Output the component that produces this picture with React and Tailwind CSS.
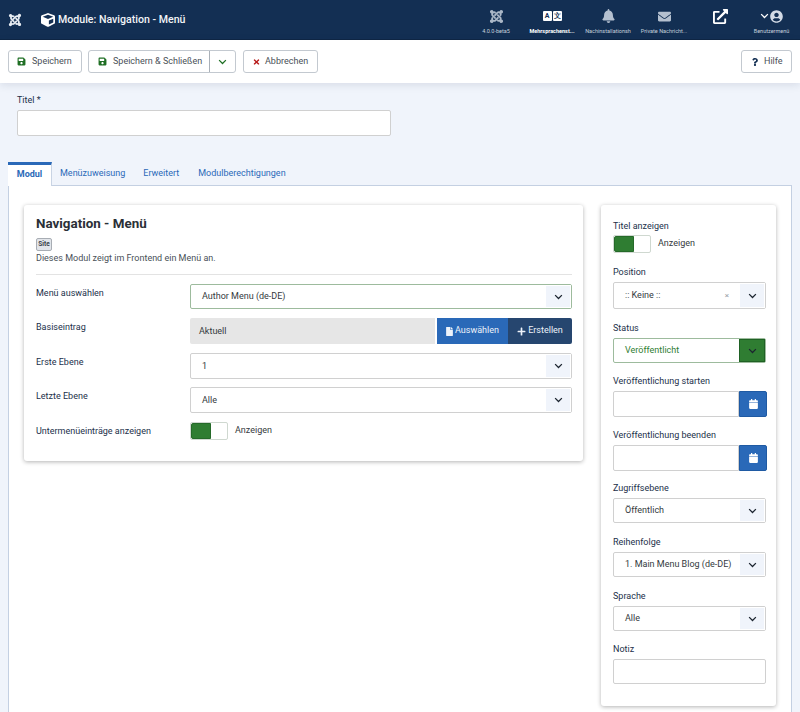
import React from "react";
import { FaJoomla, FaCube, FaBell, FaEnvelope, FaExternalLinkAlt, FaUserCircle, FaSave, FaTimes, FaQuestion, FaFile, FaPlus, FaCalendar } from "react-icons/fa";

function Chevron({ className = "" }) {
  return (
    <svg viewBox="0 0 12 8" className={"w-[9px] h-[6px] " + className} fill="none" stroke="currentColor" strokeWidth="1.7">
      <path d="M1.5 1.5 6 6l4.5-4.5" />
    </svg>
  );
}

function Lang() {
  return (
    <span className="flex gap-[1px] text-[7px] font-bold text-[#132f53] leading-none">
      <span className="w-[9px] h-[10px] bg-white rounded-[1px] flex items-center justify-center">A</span>
      <span className="w-[9px] h-[10px] bg-white rounded-[1px] flex items-center justify-center text-[6.5px] [font-family:'Noto_Sans_CJK_SC',sans-serif]">文</span>
    </span>
  );
}

function HeaderItem({ icon, label, bold, w = "w-[56px]" }) {
  return (
    <div className={"flex flex-col items-center " + w}>
      <div className="h-[18px] flex items-center justify-center text-[#d3dbe6]">{icon}</div>
      <div className={"mt-[2px] text-[5.5px] leading-[9px] whitespace-nowrap " + (bold ? "text-white font-bold" : "text-[#c5cfdc]")}>{label}</div>
    </div>
  );
}

function ToolBtn({ icon, children, w }) {
  return (
    <button className={"h-[23px] bg-white border border-[#c3c9d0] rounded-[3px] flex items-center whitespace-nowrap text-[9px] text-[#495057] " + w}>
      {icon}
      {children}
    </button>
  );
}

function Select({ value, tone = "normal", clear, h = "h-[25px]", nudge = "" }) {
  const green = tone === "green";
  const border = tone === "normal" ? "border-[#d0d0d0]" : "border-[#9dbb9d]";
  return (
    <div className={"w-full bg-white rounded-[2px] border flex items-center text-[9px] " + h + " " + border + (green ? " text-[#2f7d32]" : " text-[#343a40]")}>
      <span className={"flex-1 pl-[11px] whitespace-nowrap " + nudge}>{value}</span>
      {clear && <span className="text-[8px] text-[#9aa0a6] mr-[10px]">×</span>}
      <span className={"w-[26px] h-full flex items-center justify-center text-[#1c2530] " + (green ? "bg-[#2f7d32] border border-[#1f6124]" : "bg-[#f0f4fb] border border-white")}>
        <Chevron />
      </span>
    </div>
  );
}

function Toggle() {
  return (
    <div className="flex items-center">
      <div className="w-[38px] h-[18px] border border-[#cfd8d0] rounded-[2px] bg-white flex">
        <div className="w-[20px] h-full bg-[#2f7d32] border border-[#256a29] rounded-l-[2px]" />
      </div>
      <span className="ml-[7px] text-[9px] text-[#343a40]">Anzeigen</span>
    </div>
  );
}

function Row({ label, children, top = "mt-[9px]" }) {
  return (
    <div className={"flex " + top}>
      <div className="w-[154px] shrink-0 pt-[2px] text-[9px] leading-[15px] text-[#22304a]">{label}</div>
      <div className="flex-1">{children}</div>
    </div>
  );
}

function Side({ label, children, mt = "mt-[12px]" }) {
  return (
    <div className={mt}>
      <div className="text-[9px] leading-[14px] text-[#22304a] mb-[3px]">{label}</div>
      {children}
    </div>
  );
}

function DateInput() {
  return (
    <div className="h-[26px] flex -mr-[1px]">
      <div className="flex-1 bg-white border border-[#d0d0d0] rounded-l-[2px]" />
      <div className="w-[28px] bg-[#2a69b8] border border-[#1f5aa3] rounded-r-[2px] flex items-center justify-center text-white">
        <FaCalendar className="w-[9px] h-[10px]" />
      </div>
    </div>
  );
}

export default function App() {
  return (
    <div className="w-[800px] h-[712px] overflow-hidden bg-[#f0f4fb] [font-family:Roboto,sans-serif] flex flex-col">
      <header className="h-[40px] shrink-0 bg-[#132f53] border-b border-[#0e2644] flex items-center text-white">
        <FaJoomla className="ml-[8px] w-[14px] h-[14px] text-[#e6ebf1]" />
        <FaCube className="ml-[19px] w-[14px] h-[14px]" />
        <span className="ml-[3px] text-[10.6px] font-medium text-[#f2f4f7]">Module: Navigation - Menü</span>
        <div className="ml-auto flex items-start pt-[7px] h-full pr-[5px]">
          <HeaderItem label="4.0.0-beta5" icon={<FaJoomla className="w-[15px] h-[15px] text-[#aab7c7]" />} />
          <HeaderItem bold label="Mehrsprachenst..." icon={<Lang />} />
          <HeaderItem label="Nachinstallationsh" icon={<FaBell className="w-[13px] h-[14px] text-[#b4c0cf]" />} />
          <HeaderItem label="Private Nachricht..." icon={<FaEnvelope className="w-[15px] h-[13px] text-[#b4c0cf]" />} />
          <div className="w-[56px] flex justify-center pt-[2px]"><FaExternalLinkAlt className="w-[15px] h-[15px] text-white" /></div>
          <HeaderItem w="w-[47px]" label="Benutzermenü" icon={<span className="flex items-center gap-[1px]"><Chevron className="text-white" /><FaUserCircle className="w-[13px] h-[13px] text-[#d3dbe6]" /></span>} />
        </div>
      </header>

      <div className="h-[43px] shrink-0 bg-white shadow-[0_2px_8px_rgba(30,50,80,0.12)] flex items-center px-[8px] relative z-10">
        <ToolBtn w="w-[74px] pl-[8px]" icon={<FaSave className="w-[9px] h-[9px] text-[#1f6f24] mr-[6px]" />}>Speichern</ToolBtn>
        <div className="ml-[6px] flex h-[23px] bg-white border border-[#c3c9d0] rounded-[3px] text-[9px] text-[#495057] whitespace-nowrap">
          <div className="w-[120px] pl-[9px] flex items-center">
            <FaSave className="w-[9px] h-[9px] shrink-0 text-[#1f6f24] mr-[6px]" />
            Speichern &amp; Schließen
          </div>
          <div className="w-[26px] border-l border-[#a9b0b8] flex items-center justify-center text-[#1f6f24]"><Chevron /></div>
        </div>
        <ToolBtn w="ml-[7px] w-[75px] pl-[9px]" icon={<FaTimes className="w-[7px] h-[8px] text-[#b81c1c] mr-[5px]" />}>Abbrechen</ToolBtn>
        <ToolBtn w="ml-auto w-[51px] pl-[10px]" icon={<FaQuestion className="w-[6px] h-[10px] text-[#132f53] mr-[6px]" />}>Hilfe</ToolBtn>
      </div>

      <div className="px-[17px] pt-[10px]">
        <div className="text-[9px] leading-[14px] text-[#22304a] mb-[3px]">Titel *</div>
        <div className="w-[374px] h-[26px] bg-white border border-[#d0d0d0] rounded-[2px]" />
      </div>

      <div className="mt-[26px] mx-[8px] flex-1 flex flex-col min-h-0">
        <div className="flex h-[24px] text-[9px] text-[#2a69b8] relative z-10">
          <div className="w-[44px] h-[24px] bg-white border-t-[3px] border-t-[#2a69b8] border-r border-r-[#c9d4e4] font-bold flex items-center justify-center pb-[2px] text-[#2a69b8]">Modul</div>
          <div className="ml-[8px] flex items-center">Menüzuweisung</div>
          <div className="ml-[18px] flex items-center">Erweitert</div>
          <div className="ml-[19px] flex items-center">Modulberechtigungen</div>
        </div>
        <div className="flex-1 -mt-[1px] bg-white border border-[#c4d0e2] border-b-0 flex items-start pt-[19px] pl-[15px] gap-[18px]">
          <section className="w-[559px] h-[256px] shrink-0 bg-white rounded-[3px] shadow-[0_1px_4px_rgba(0,0,0,0.3)] pl-[12px] pr-[11px] pt-[10px]">
            <h2 className="text-[13.4px] leading-[17px] font-bold text-[#2a2f36]">Navigation - Menü</h2>
            <div className="mt-[6px] w-[16px] h-[13px] rounded-[2px] bg-[#e2e5ea] border border-[#a8adb4] text-[6.5px] font-bold text-[#3b4148] flex items-center justify-center">Site</div>
            <p className="text-[9px] leading-[14px] text-[#495057]">Dieses Modul zeigt im Frontend ein Menü an.</p>
            <hr className="mt-[9px] border-0 border-t border-[#e3e3e3]" />
            <Row label="Menü auswählen"><Select value="Author Menu (de-DE)" tone="greenplain" /></Row>
            <Row label="Basiseintrag">
              <div className="h-[26px] flex text-[9px]">
                <div className="flex-1 bg-[#e6e6e6] rounded-l-[2px] pl-[9px] pt-[1px] flex items-center text-[#343a40]">Aktuell</div>
                <div className="ml-[2px] w-[71px] bg-[#2a69b8] text-[#eef3fa] flex items-center justify-center gap-[2px]"><FaFile className="w-[7px] h-[9px]" />Auswählen</div>
                <div className="w-[64px] bg-[#26466f] text-[#eef3fa] rounded-r-[2px] flex items-center justify-center gap-[2px]"><FaPlus className="w-[9px] h-[9px]" />Erstellen</div>
              </div>
            </Row>
            <Row label="Erste Ebene"><Select value="1" h="h-[26px]" nudge="pt-[1px]" /></Row>
            <Row label="Letzte Ebene" top="mt-[8px]"><Select value="Alle" h="h-[26px]" nudge="pt-[1px]" /></Row>
            <Row label="Untermenüeinträge anzeigen"><Toggle /></Row>
          </section>

          <aside className="w-[175px] h-[501px] shrink-0 bg-white rounded-[3px] shadow-[0_1px_4px_rgba(0,0,0,0.3)] pl-[12px] pr-[10px] pt-[14px]">
            <div className="text-[9px] leading-[14px] text-[#22304a] mb-[2px]">Titel anzeigen</div>
            <Toggle />
            <Side label="Position" mt="mt-[12px]"><Select value=":: Keine ::" clear h="h-[27px]" nudge="pt-[1px]" /></Side>
            <Side label="Status"><Select value="Veröffentlicht" tone="green" /></Side>
            <Side label="Veröffentlichung starten" mt="mt-[11px]"><DateInput /></Side>
            <Side label="Veröffentlichung beenden" mt="mt-[11px]"><DateInput /></Side>
            <Side label="Zugriffsebene" mt="mt-[10px]"><Select value="Öffentlich" /></Side>
            <Side label="Reihenfolge"><Select value="1. Main Menu Blog (de-DE)" /></Side>
            <Side label="Sprache"><Select value="Alle" /></Side>
            <Side label="Notiz" mt="mt-[11px]"><div className="h-[25px] bg-white border border-[#d0d0d0] rounded-[2px]" /></Side>
          </aside>
        </div>
      </div>
    </div>
  );
}
